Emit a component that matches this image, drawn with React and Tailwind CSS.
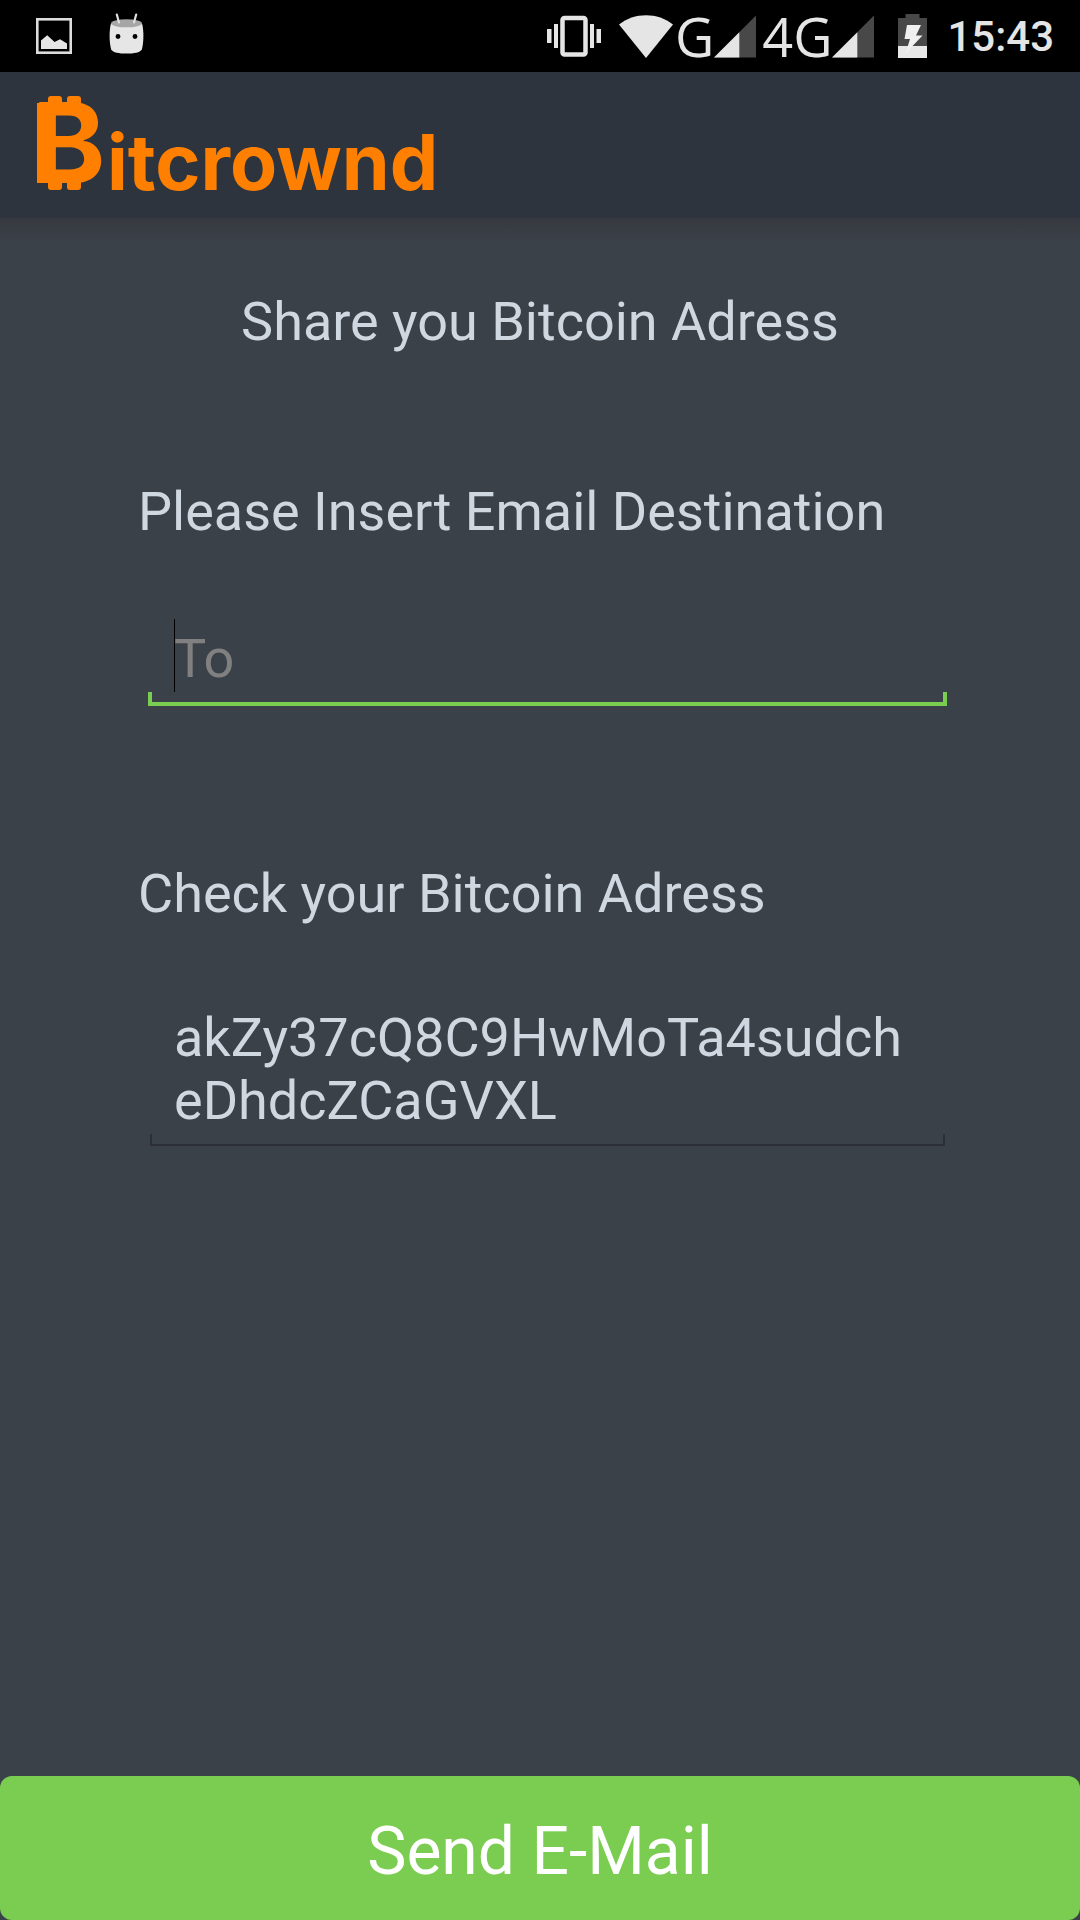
import React from "react";

function PictureIcon() {
  return (
    <svg className="h-9 w-9" viewBox="0 0 36 36" aria-hidden="true">
      <rect x="1.3" y="1.3" width="33.4" height="33.4" fill="none" stroke="#dcdcdc" strokeWidth="2.6" />
      <path d="M5 22.5 11.2 17.2 18.6 24 24 21.2 31 25.5V31H5z" fill="#e6e6e6" />
    </svg>
  );
}

function RobotIcon() {
  return (
    <svg className="h-[41px] w-[35px]" viewBox="0 0 35 41" aria-hidden="true">
      <path d="M2 10.5C0 17 .2 30 2.200 36.500 4 39.600 10 40.600 17.500 40.600S31 39.600 32.800 36.500C34.800 30 35 17 33 10.500z" fill="#e6e6e6" />
      <ellipse cx="17.500" cy="10.300" rx="15.500" ry="4" fill="#a6a6a6" />
      <path d="M7.800 1.500 10 9.500M27.200 1.500 25 9.500" stroke="#e0e0e0" strokeWidth="2.200" strokeLinecap="round" />
      <circle cx="9" cy="23.500" r="2.400" fill="#000" />
      <circle cx="26" cy="23.500" r="2.400" fill="#000" />
    </svg>
  );
}

function VibrateIcon() {
  return (
    <svg className="h-[42px] w-[54px]" viewBox="0 0 54 42" aria-hidden="true">
      <rect x="15.500" y="3" width="23" height="36.500" rx="2" fill="none" stroke="#e5e5e5" strokeWidth="4.500" />
      <path d="M0 14h4.500v14H0zM7 9h4v24H7zM43 9h4v24h-4zM49.500 14H54v14h-4.500z" fill="#e5e5e5" />
    </svg>
  );
}

function WifiIcon() {
  return (
    <svg className="h-[43px] w-[54px]" viewBox="0 0 54 43" aria-hidden="true">
      <path d="M0 9.500C15-3 39-3 54 9.500L27 43z" fill="#e5e5e5" />
    </svg>
  );
}

function SignalIcon() {
  return (
    <svg className="h-[43px] w-[42px]" viewBox="0 0 42 43" aria-hidden="true">
      <path d="M0 42.500 42 .5v42z" fill="#484848" />
      <path d="M0 42.500 25.300 17.200v25.300z" fill="#e5e5e5" />
    </svg>
  );
}

function BatteryIcon() {
  return (
    <svg className="h-[44px] w-[29px]" viewBox="0 0 29 44" aria-hidden="true">
      <path d="M7.500 0h14v4H29v40H0V4h7.500z" fill="#484848" />
      <path d="M0 32h29v12H0z" fill="#e8e8e8" />
      <path d="M9 11h14l-5 10.500h6.500L7.500 39.500 12 25H6.500z" fill="#f0f0f0" />
    </svg>
  );
}

function StatusBar() {
  return (
    <div className="flex h-[72px] items-center justify-between bg-black pr-[26px] pl-9 text-[#e5e5e5]">
      <div className="flex items-center gap-[37px]">
        <PictureIcon />
        <div className="pb-1.5">
          <RobotIcon />
        </div>
      </div>
      <div className="flex items-center">
        <VibrateIcon />
        <div className="ml-[18px] flex items-center">
          <WifiIcon />
          <span className="ml-0.5 font-['Open_Sans',sans-serif] text-[54px] leading-[72px]">G</span>
          <SignalIcon />
        </div>
        <div className="ml-1.5 flex items-center">
          <span className="font-['Open_Sans',sans-serif] text-[54px] leading-[72px]">4G</span>
          <SignalIcon />
        </div>
        <div className="mr-5 ml-6">
          <BatteryIcon />
        </div>
        <time className="pt-0.5 text-[42px] leading-[72px] font-medium">15:43</time>
      </div>
    </div>
  );
}

function Logo() {
  return (
    <svg className="h-[146px] w-[460px]" viewBox="0 0 460 146" role="img" aria-label="Bitcrownd" fill="#ff8000">
      <path d="M37 31h16v80H37z" />
      <path d="M48 34v-7q0-3 3-3h8q3 0 3 3v7zM67 34v-7q0-3 3-3h8q3 0 3 3v7zM48 108v7q0 3 3 3h8q3 0 3-3v-7zM67 108v7q0 3 3 3h8q3 0 3-3v-7z" />
      <text x="32" y="111" fontFamily="Inter, sans-serif" fontWeight="700" fontSize="111">B</text>
      <text x="107" y="118" fontFamily="Inter, sans-serif" fontWeight="700" fontSize="77">itcrownd</text>
    </svg>
  );
}

export default function App() {
  return (
    <div className="flex min-h-screen flex-col bg-[#3b4149] font-[Roboto,sans-serif] text-[54px] leading-[63px] text-[#cfd7e0]">
      <StatusBar />
      <header className="h-[146px] bg-[#2e343e]">
        <Logo />
      </header>
      <div className="h-6 bg-linear-to-b from-[#36393f] to-[#3b4149]" />
      <main className="flex flex-1 flex-col">
        <h1 className="mt-12 text-center">Share you Bitcoin Adress</h1>
        <form id="share" className="flex flex-1 flex-col">
          <div className="mt-[127px] flex flex-col pr-[120px] pl-[138px]">
            <label htmlFor="to">Please Insert Email Destination</label>
            <div className="relative mt-[84px] mr-[13px] ml-2.5">
              <input
                id="to"
                type="email"
                placeholder="To"
                className="block h-[63px] w-full bg-transparent px-[26px] outline-none placeholder:text-[#808080]"
              />
              <span className="absolute -top-2 left-[26px] h-[73px] w-px bg-black" />
              <div className="mt-0.5 h-3.5 border-x-4 border-b-4 border-[#7acd50]" />
            </div>
            <label htmlFor="address" className="mt-[156px]">
              Check your Bitcoin Adress
            </label>
            <div className="mt-[81px] mr-[15px] ml-3">
              <textarea
                id="address"
                rows={2}
                defaultValue="akZy37cQ8C9HwMoTa4sudcheDhdcZCaGVXL"
                className="block w-full resize-none overflow-hidden bg-transparent px-6 break-all outline-none"
              />
              <div className="mt-0.5 h-3 border-x-2 border-b-2 border-[#2c3036]" />
            </div>
          </div>
          <button type="button" className="mt-auto h-36 w-full rounded-xl bg-[#7acd50] pt-1.5 text-[66px] text-white">
            Send E-Mail
          </button>
        </form>
      </main>
    </div>
  );
}
